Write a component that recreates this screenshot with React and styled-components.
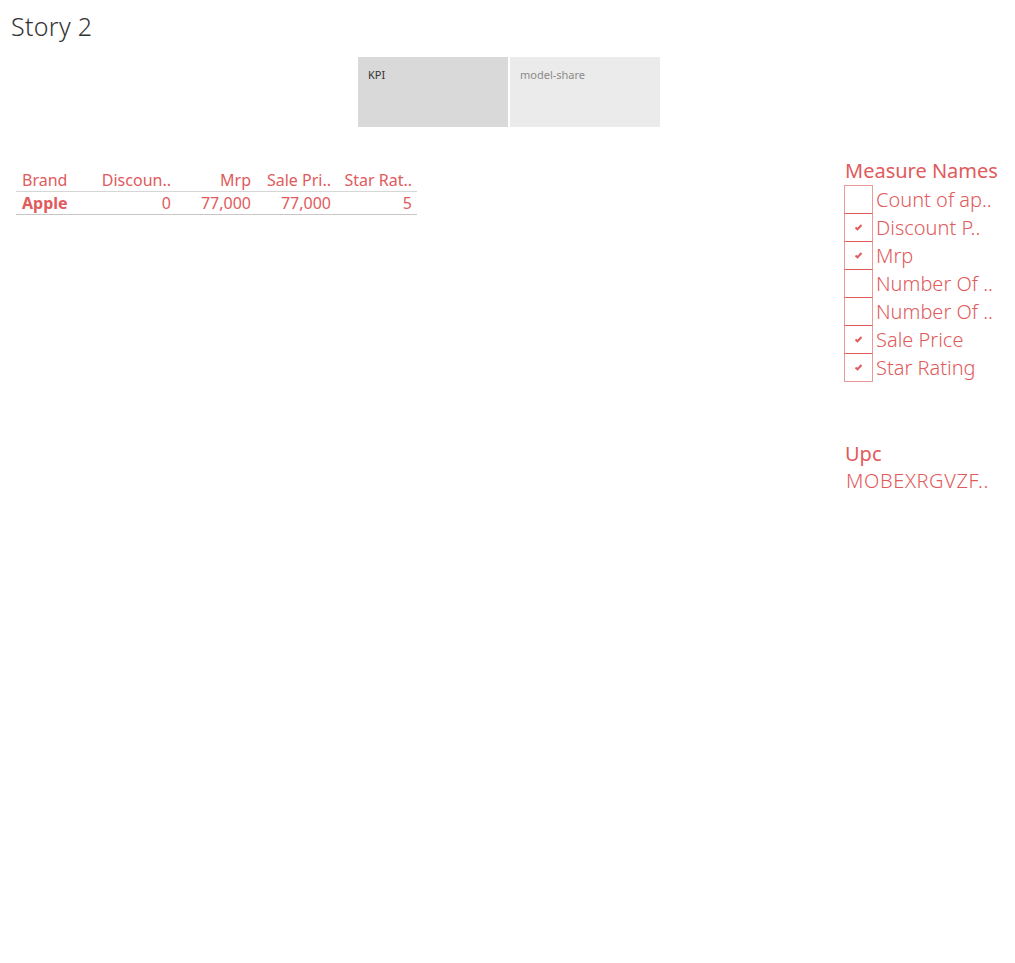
import React from 'react';
import styled, { createGlobalStyle } from 'styled-components';

const RED = '#e15a5c';

const Global = createGlobalStyle`
  body {
    margin: 0;
    background: #fff;
    font-family: "Noto Sans", "Open Sans", sans-serif;
  }
`;

const Page = styled.div`
  width: 1015px;
  height: 963px;
`;

const Title = styled.h1`
  margin: 0;
  padding: 12px 0 0 11px;
  height: 45px;
  box-sizing: border-box;
  font-size: 25px;
  font-weight: 300;
  color: #333;
  line-height: 28px;
  letter-spacing: 0.3px;
`;

const Tabs = styled.div`
  display: flex;
  gap: 2px;
  margin: 12px 0 0 358px;
`;

const Tab = styled.div`
  width: 150px;
  height: 70px;
  box-sizing: border-box;
  padding: 10px 10px;
  font-size: 11px;
  background: ${p => (p.$active ? '#d9d9d9' : '#ebebeb')};
  color: ${p => (p.$active ? '#333' : '#8a8a8a')};
`;

const Body = styled.div`
  display: flex;
  justify-content: space-between;
  margin-top: 33px;
`;

const Table = styled.div`
  margin: 9px 0 0 16px;
  width: 401px;
  color: ${RED};
  font-size: 16px;
`;

const Row = styled.div`
  display: grid;
  grid-template-columns: 80px 80px 80px 80px 81px;
  height: 22px;
  align-items: center;
  border-bottom: 1px solid ${p => (p.$strong ? '#c8c8c8' : '#d6d6d6')};
`;

const Cell = styled.div`
  padding: ${p => (p.$left ? '0 0 0 6px' : '0 5px 0 0')};
  text-align: ${p => (p.$left ? 'left' : 'right')};
  white-space: nowrap;
  font-weight: ${p => (p.$bold ? 700 : 400)};
`;

const Side = styled.div`
  width: 171px;
  margin-top: -1px;
  color: ${RED};
`;

const LegendTitle = styled.div`
  font-size: 20px;
  line-height: 24px;
  padding-left: 1px;
  height: 26px;
`;

const LegendItem = styled.div`
  display: flex;
  align-items: center;
  height: 28px;
  font-size: 20px;
  font-weight: 300;
  white-space: nowrap;
`;

const Box = styled.div`
  width: 27px;
  height: 27px;
  border: 1px solid #ea9a9b;
  border-top-color: ${p => (p.$first ? '#ea9a9b' : RED)};
  display: flex;
  align-items: center;
  justify-content: center;
  margin-right: 3px;
`;

const UpcTitle = styled.div`
  font-size: 20px;
  line-height: 24px;
  margin-top: 61px;
  padding-left: 1px;
`;

const UpcValue = styled.div`
  font-size: 20px;
  line-height: 28px;
  padding-left: 2px;
  margin-top: 1px;
  font-weight: 300;
  letter-spacing: 0.6px;
  white-space: nowrap;
`;

const Check = () => (
  <svg width="9" height="8" viewBox="0 0 9 8">
    <path d="M1.5 4.5 L3.5 6.3 L7.5 2" stroke={RED} strokeWidth="2" fill="none" />
  </svg>
);

const items = [
  ['Count of ap..', false],
  ['Discount P..', true],
  ['Mrp', true],
  ['Number Of ..', false],
  ['Number Of ..', false],
  ['Sale Price', true],
  ['Star Rating', true],
];

export default function App() {
  return (
    <Page>
      <Global />
      <Title>Story 2</Title>
      <Tabs>
        <Tab $active>KPI</Tab>
        <Tab>model-share</Tab>
      </Tabs>
      <Body>
        <Table>
          <Row>
            <Cell $left>Brand</Cell>
            <Cell>Discoun..</Cell>
            <Cell>Mrp</Cell>
            <Cell>Sale Pri..</Cell>
            <Cell>Star Rat..</Cell>
          </Row>
          <Row $strong>
            <Cell $left $bold>Apple</Cell>
            <Cell>0</Cell>
            <Cell>77,000</Cell>
            <Cell>77,000</Cell>
            <Cell>5</Cell>
          </Row>
        </Table>
        <Side>
          <LegendTitle>Measure Names</LegendTitle>
          {items.map(([label, on], i) => (
            <LegendItem key={i}>
              <Box $first={i === 0}>{on && <Check />}</Box>
              {label}
            </LegendItem>
          ))}
          <UpcTitle>Upc</UpcTitle>
          <UpcValue>MOBEXRGVZF..</UpcValue>
        </Side>
      </Body>
    </Page>
  );
}
